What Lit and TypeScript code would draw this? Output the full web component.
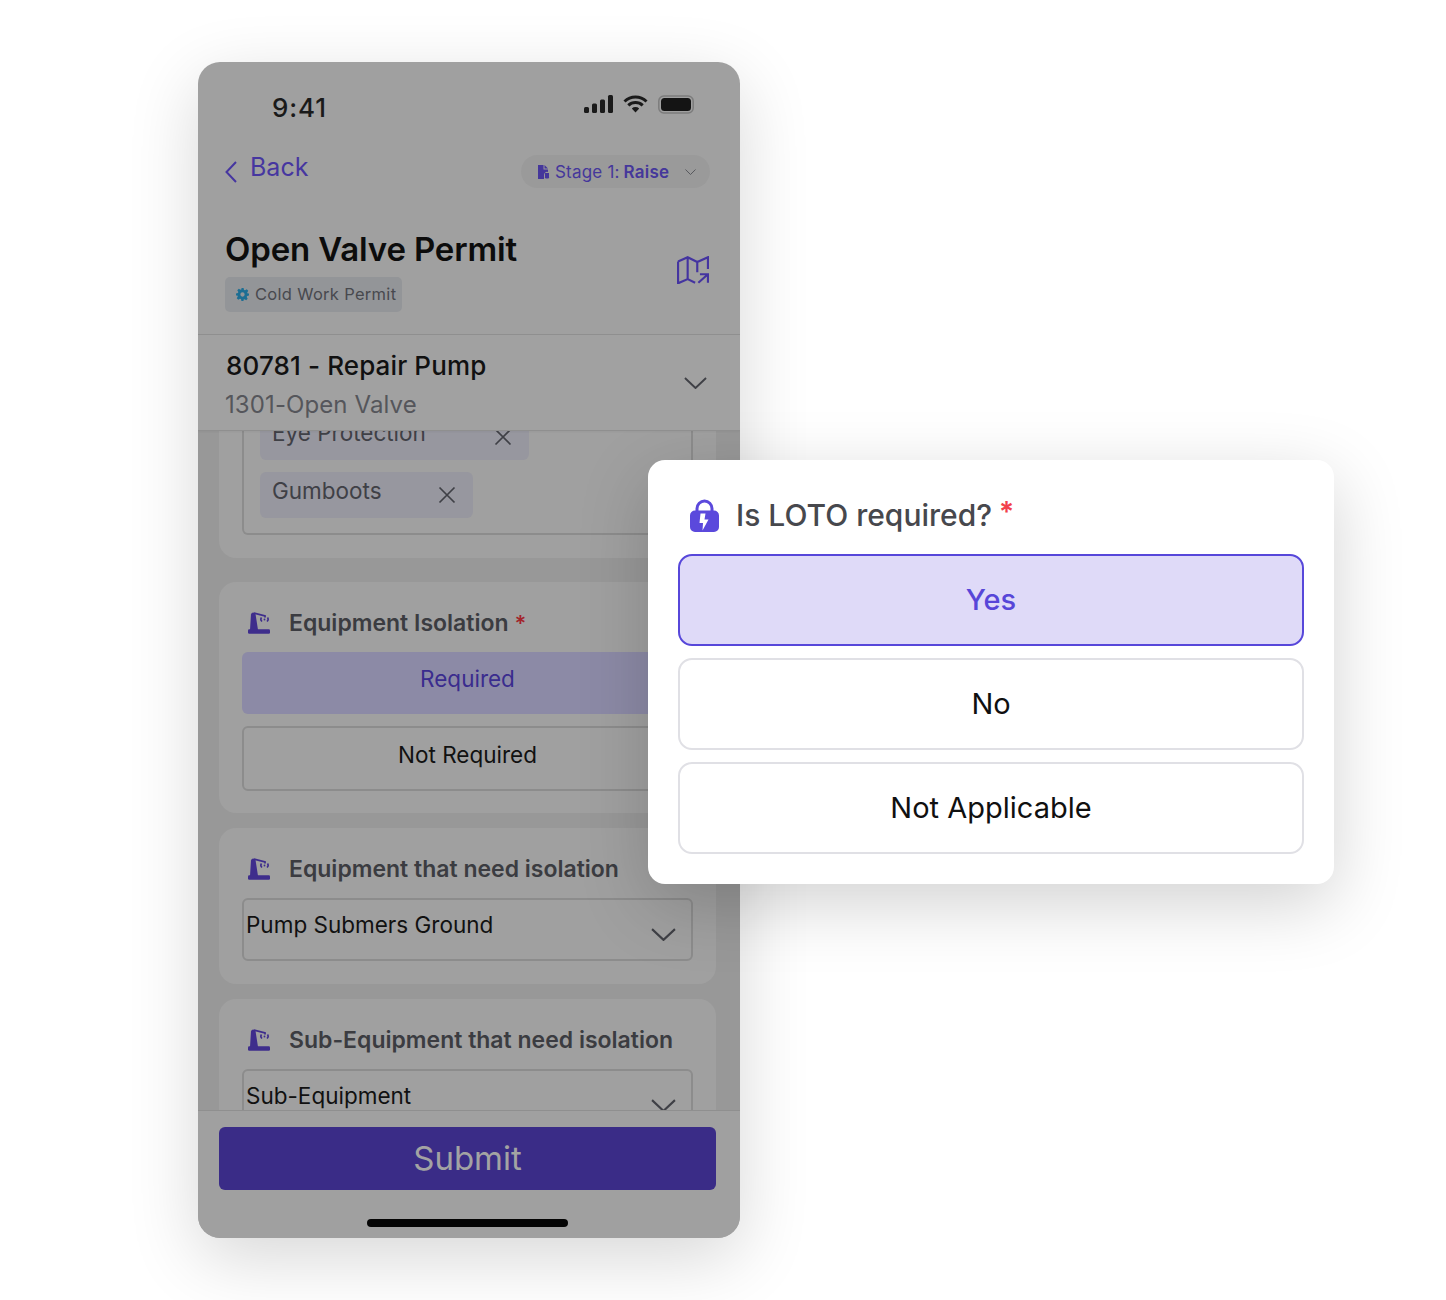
import { LitElement, html, css } from "lit";
import { customElement } from "lit/decorators.js";

const robot = html`<svg class="robot" viewBox="0 0 22 22" width="22" height="22">
  <rect x="0" y="17.300" width="22" height="4.400" rx="1.200" fill="#3e2d8c"/>
  <path fill="#3e2d8c" d="M2 18L3 2.500a2.200 2.200 0 0 1 3.500-1.500L7.500 2 10 18Z"/>
  <path fill="none" stroke="#3e2d8c" stroke-width="1.800" d="M6 1l11 3v1.500"/>
  <path fill="none" stroke="#3e2d8c" stroke-width="1.600" d="M13.500 5.500a3 3 0 0 0 .5 4M19.500 5.500a3 3 0 0 1-.5 4"/>
  <circle cx="16.500" cy="7.500" r=".9" fill="#3e2d8c"/>
</svg>`;

const chevron = (w: number, h: number, color = "#3f4046") => html`<svg width=${w} height=${h} viewBox="0 0 24 12" preserveAspectRatio="none"><path d="M1 1l11 10L23 1" fill="none" stroke=${color} stroke-width="2"/></svg>`;
const cross = html`<svg width="18" height="18" viewBox="0 0 18 18"><path d="M1.500 1.500l15 15M16.500 1.500l-15 15" stroke="#3f4046" stroke-width="1.700" fill="none"/></svg>`;

@customElement("app-root")
export class AppRoot extends LitElement {
  static styles = css`
    :host { display: block; width: 1446px; height: 1300px; overflow: hidden; background: #fff; font-family: Inter, "Liberation Sans", sans-serif; position: relative; }
    * { box-sizing: border-box; }
    .page { padding: 62px 0 0 198px; }
    .phone { width: 542px; height: 1176px; border-radius: 22px; background: #a0a0a0; display: flex; flex-direction: column; overflow: hidden; }
    .phone-wrap { width: 542px; border-radius: 22px; box-shadow: 0 20px 70px rgba(0,0,0,.16); }
    .top { height: 273px; flex: none; border-bottom: 1px solid #8f8f8f; display: flex; flex-direction: column; padding: 0 30px 0 27px; }
    .status { height: 61px; flex: none; display: flex; align-items: flex-end; justify-content: space-between; padding: 0 16px 0 47px; }
    .time { font-size: 26px; font-weight: 500; color: #1a1a1a; line-height: 32px; margin-bottom: -1px; letter-spacing: .9px; }
    .status-icons { display: flex; align-items: center; gap: 10px; height: 22px; margin-bottom: 8px; }
    .nav { display: flex; align-items: flex-start; justify-content: space-between; margin-top: 32px; height: 33px; }
    .back { display: flex; align-items: flex-start; gap: 13px; color: #4636a0; font-size: 25px; line-height: 30px; margin-top: -3px; }
    .back svg { margin-top: 9px; }
    .stage { width: 189px; height: 33px; border-radius: 17px; background: #9a9a9a; display: flex; align-items: center; padding-left: 16px; color: #45379b; font-size: 17px; gap: 5px; letter-spacing: .2px; }
    .stage b { font-weight: 600; margin-left: -1px; }
    .stage .car { margin-left: 11px; display: flex; }
    .title-row { display: flex; justify-content: space-between; margin-top: 39px; }
    h1 { margin: 0; font-size: 33px; line-height: 44px; font-weight: 600; color: #0c0c0c; letter-spacing: -.15px; }
    .tag { margin-top: 6px; width: 177px; height: 35px; border-radius: 5px; background: #939598; display: flex; align-items: center; gap: 6px; padding: 0 0 1px 11px; font-size: 16.500px; color: #48494e; letter-spacing: .3px; }
    .map { margin-top: 29px; margin-right: 1px; }
    .job { height: 96px; flex: none; border-bottom: 1px solid #8f8f8f; display: flex; justify-content: space-between; padding: 14px 33px 0 28px; background: #a1a1a1; box-shadow: 0 1px 2px rgba(0,0,0,.05); z-index: 1; }
    .job .a { font-size: 26px; line-height: 34px; font-weight: 500; color: #111; letter-spacing: .12px; }
    .job .b { font-size: 24px; line-height: 34px; margin-top: 5px; color: #55565b; margin-left: -1px; letter-spacing: .1px; }
    .job svg { margin-top: 28px; }
    .scroll { flex: 1; min-height: 0; overflow: hidden; background: #989898; padding: 0 24px 0 21px; display: flex; flex-direction: column; }
    .card { flex: none; border-radius: 17px; background: #a0a0a0; padding: 0 23px; }
    .card.first { margin-top: -60px; height: 187px; padding-top: 1px; }
    .card.eq { margin-top: 24px; height: 231px; padding-top: 26px; }
    .card.sel { margin-top: 15px; height: 156px; padding-top: 26px; }
    .card.sel2 { margin-top: 15px; height: 200px; padding-top: 26px; }
    .box { border: 2px solid #8c8c8c; border-top: 0; border-radius: 0 0 6px 6px; height: 163px; padding: 42px 0 0 16px; }
    .chip { border-radius: 6px; background: #97979f; height: 46px; display: flex; align-items: center; justify-content: space-between; padding: 0 17px 0 12px; font-size: 22.500px; color: #3f4046; margin-bottom: 12px; }
    .chip span { margin-top: -10px; }
    .chip.e { width: 269px; }
    .chip.g { width: 213px; }
    .label { display: flex; align-items: center; height: 30px; gap: 19px; font-size: 23px; font-weight: 600; color: #3b3c41; margin-left: 6px; }
    .label .star { color: #a3242c; margin-left: -13px; font-size: 22px; }
    .opt { height: 62px; border-radius: 6px; display: flex; align-items: center; justify-content: center; font-size: 22.500px; padding-bottom: 10px; }
    .opt.on { margin-top: 14px; background: #8c8aa6; color: #3a2c8e; }
    .opt.off { margin-top: 12px; height: 65px; border: 2px solid #8c8c8c; color: #111; padding-bottom: 8px; }
    .select { margin-top: 14px; height: 63px; border: 2px solid #8c8c8c; border-radius: 6px; display: flex; justify-content: space-between; padding: 0 15px 0 2px; color: #111; font-size: 22.500px; line-height: 30px; }
    .select span { margin-top: 10px; }
    .select svg { margin-top: 28px; }
    .foot { height: 128px; flex: none; border-top: 1px solid #8f8f8f; background: #a0a0a0; padding: 16px 24px 0 21px; display: flex; flex-direction: column; align-items: center; z-index: 1; }
    .submit { width: 100%; height: 63px; border-radius: 6px; background: #3a2c87; color: #a3a3a3; font-size: 33px; display: flex; align-items: center; justify-content: center; padding-bottom: 2px; }
    .home { width: 201px; height: 8px; border-radius: 4px; background: #050505; margin-top: 29px; }

    .dialog { position: absolute; left: 648px; top: 460px; width: 686px; height: 424px; background: #fff; border-radius: 17px; box-shadow: 0 20px 70px rgba(0,0,0,.18); padding: 0 30px; }
    .q { display: flex; align-items: flex-start; height: 94px; padding: 37px 0 0 12px; color: #47484d; font-size: 30px; font-weight: 500; line-height: 36px; gap: 17px; }
    .q svg { flex: none; margin-top: 2px; }
    .q .star { color: #f2414c; margin-left: -10px; font-size: 28px; font-weight: 600; margin-top: -3px; }
    .choice { height: 92px; border: 2px solid #e0e0e5; border-radius: 14px; display: flex; align-items: center; justify-content: center; font-size: 29px; color: #101010; margin-bottom: 12px; padding-bottom: 1px; }
    .choice.on { background: #dfdaf8; border-color: #5747da; color: #5746d8; font-weight: 500; padding-bottom: 2px; }
  `;

  render() {
    return html`
      <div class="page"><div class="phone-wrap"><div class="phone">
        <div class="top">
          <div class="status">
            <div class="time">9:41</div>
            <div class="status-icons">
              <svg width="29" height="18" viewBox="0 0 29 18"><rect x="0" y="12" width="5" height="6" rx="1.500" fill="#1a1a1a"/><rect x="8" y="8.500" width="5" height="9.500" rx="1.500" fill="#1a1a1a"/><rect x="16" y="4.500" width="5" height="13.500" rx="1.500" fill="#1a1a1a"/><rect x="24" y="0" width="5" height="18" rx="1.500" fill="#1a1a1a"/></svg>
              <svg width="25" height="18" viewBox="0 0 25 18"><path d="M1.500 6.500a16 16 0 0 1 22 0M5.300 10.300a10.500 10.500 0 0 1 14.400 0" fill="none" stroke="#1a1a1a" stroke-width="3"/><path d="M8.800 13.400a5.500 5.500 0 0 1 7.400 0L12.500 17.500Z" fill="#1a1a1a"/></svg>
              <svg width="36" height="19" viewBox="0 0 36 19"><rect x=".8" y="1" width="34.400" height="17" rx="5" fill="none" stroke="#7c7c7c" stroke-width="1.500"/><rect x="3" y="3" width="30" height="13" rx="3.500" fill="#141414"/></svg>
            </div>
          </div>
          <div class="nav">
            <div class="back">
              <svg width="12" height="22" viewBox="0 0 12 22"><path d="M11 1L1.500 11 11 21" fill="none" stroke="#4636a0" stroke-width="2"/></svg>
              <span>Back</span>
            </div>
            <div class="stage">
              <svg width="13" height="14" viewBox="0 0 13 14"><path fill="#45379b" d="M1 0h5.500v4.500H11V7a3 3 0 0 0-4 3v4H1Z"/><path fill="#45379b" d="M7.500 0L11 3.500H7.500ZM8 8h4v4a1 1 0 0 1-1 1.500H9a1 1 0 0 1-1-1.500Z"/></svg>
              <span>Stage 1: <b>Raise</b></span>
              <span class="car">${chevron(11, 6, "#55565b")}</span>
            </div>
          </div>
          <div class="title-row">
            <div>
              <h1>Open Valve Permit</h1>
              <div class="tag">
                <svg width="13" height="13" viewBox="0 0 24 24"><path fill="#1d6e93" fill-rule="evenodd" d="M10 0h4l.8 3.500 2 .8 3-1.900 2.800 2.800-1.900 3 .8 2L24 10v4l-3.500.8-.8 2 1.900 3-2.800 2.800-3-1.900-2 .8L14 24h-4l-.8-3.500-2-.8-3 1.900-2.800-2.800 1.900-3-.8-2L0 14v-4l3.500-.8.8-2-1.900-3 2.800-2.800 3 1.900 2-.8ZM12 8a4 4 0 1 0 0 8 4 4 0 0 0 0-8Z"/></svg>
                <span>Cold Work Permit</span>
              </div>
            </div>
            <svg class="map" width="32" height="28" viewBox="1 0 30 26"><path d="M2 5L11 1l9 4.500L30 1v11M11 1v20.500M20 5v10M2 5v20.500l9-4 7 3.500M21 25l9-8M22.500 17H30v8" fill="none" stroke="#4434a0" stroke-width="2"/></svg>
          </div>
        </div>
        <div class="job">
          <div>
            <div class="a">80781 - Repair Pump</div>
            <div class="b">1301-Open Valve</div>
          </div>
          ${chevron(23, 12)}
        </div>
        <div class="scroll">
          <div class="card first">
            <div class="box">
              <div class="chip e"><span>Eye Protection</span>${cross}</div>
              <div class="chip g"><span>Gumboots</span>${cross}</div>
            </div>
          </div>
          <div class="card eq">
            <div class="label">${robot}<span>Equipment Isolation</span><span class="star">*</span></div>
            <div class="opt on">Required</div>
            <div class="opt off">Not Required</div>
          </div>
          <div class="card sel">
            <div class="label">${robot}<span>Equipment that need isolation</span></div>
            <div class="select"><span>Pump Submers Ground</span>${chevron(25, 13)}</div>
          </div>
          <div class="card sel2">
            <div class="label">${robot}<span>Sub-Equipment that need isolation</span></div>
            <div class="select"><span>Sub-Equipment</span>${chevron(25, 13)}</div>
          </div>
        </div>
        <div class="foot">
          <div class="submit">Submit</div>
          <div class="home"></div>
        </div>
      </div></div></div>

      <div class="dialog">
        <div class="q">
          <svg width="29" height="33" viewBox="0 0 29 33"><path fill="none" stroke="#5b49dc" stroke-width="3" d="M7 14V9.500a7.500 7.500 0 0 1 15 0V14"/><path fill="#5b49dc" fill-rule="evenodd" d="M5 11.500h19a5 5 0 0 1 5 5V28a5 5 0 0 1-5 5H5a5 5 0 0 1-5-5V16.500a5 5 0 0 1 5-5Z"/><path fill="#fff" d="M15.500 14.500h-5l-1 9.500h3.500l-.5 7.500 6-11h-4Z"/></svg>
          <span>Is LOTO required?</span>
          <span class="star">*</span>
        </div>
        <div class="choice on">Yes</div>
        <div class="choice">No</div>
        <div class="choice">Not Applicable</div>
      </div>
    `;
  }
}
